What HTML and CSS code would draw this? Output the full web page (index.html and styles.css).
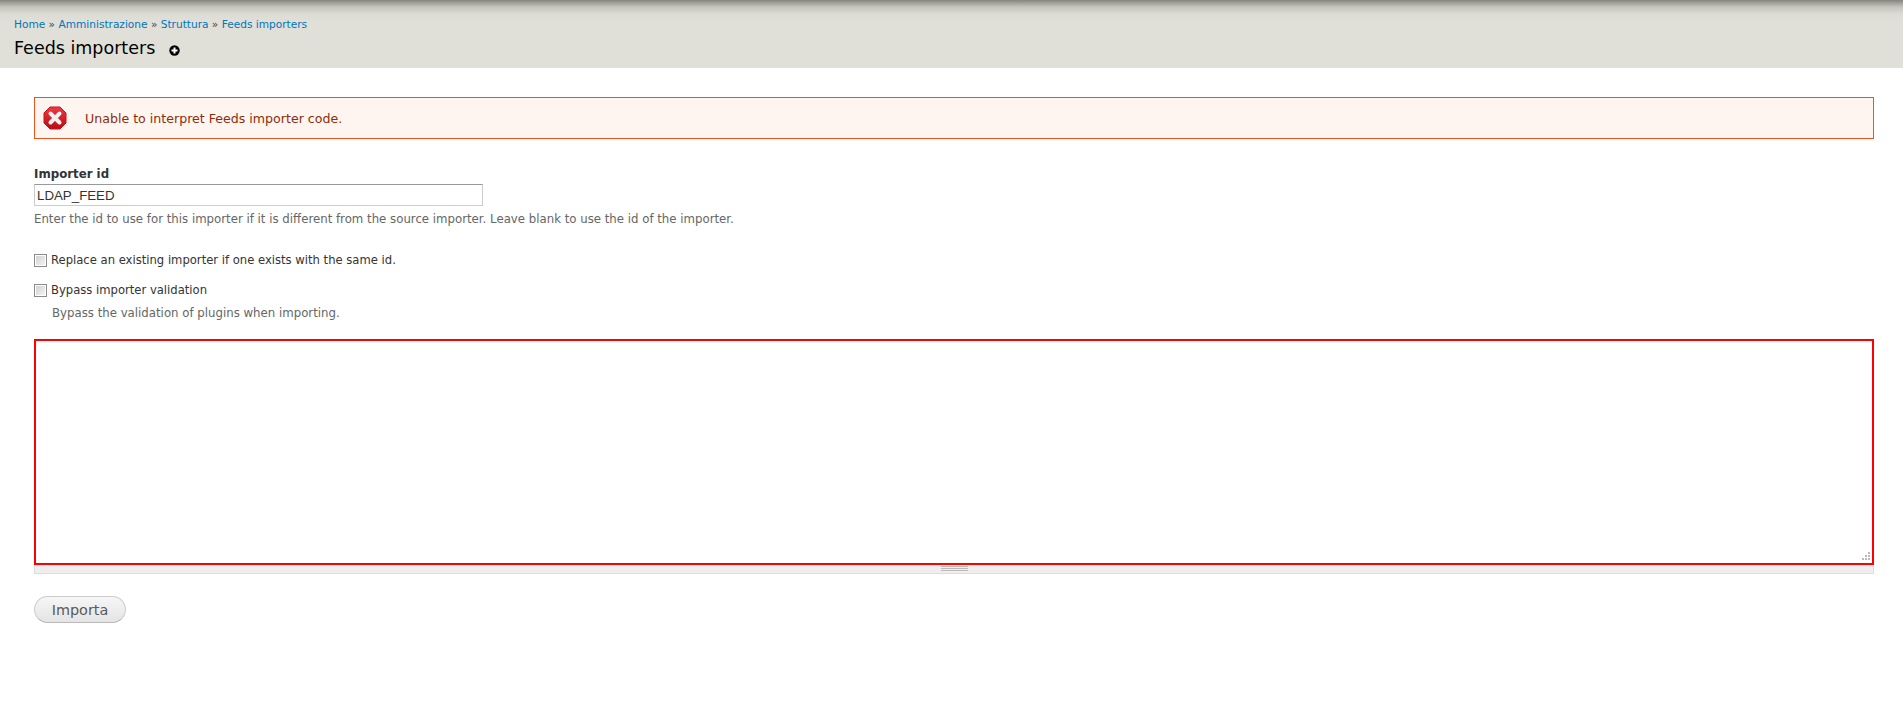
FILE: index.html
```html
<!DOCTYPE html>
<html lang="it">
<head>
<meta charset="utf-8">
<title>Feeds importers</title>
<link rel="stylesheet" href="styles.css">
</head>
<body>
<header class="branding">
  <nav class="breadcrumb"><a href="#">Home</a> » <a href="#">Amministrazione</a> » <a href="#">Struttura</a> » <a href="#">Feeds importers</a></nav>
  <div class="title-row">
    <h1 class="page-title">Feeds importers</h1>
    <a class="shortcut" href="#" aria-label="Add to shortcuts">
      <svg width="11" height="11" viewBox="0 0 11 11"><circle cx="5.5" cy="5.5" r="5.2" fill="#000"/><path d="M5.5 2.5v6M2.5 5.5h6" stroke="#fff" stroke-width="2"/></svg>
    </a>
  </div>
</header>
<main class="page">
  <div class="message-error">
    <svg class="error-icon" width="24" height="24" viewBox="0 0 24 24">
      <defs><linearGradient id="err" x1="0" y1="0" x2="0" y2="1"><stop offset="0" stop-color="#ee3a42"/><stop offset="1" stop-color="#b80b14"/></linearGradient></defs>
      <polygon points="7,1 17,1 23,7 23,17 17,23 7,23 1,17 1,7" fill="url(#err)" stroke="#c9141d"/>
      <path d="M7.5 7.5l9 9M16.5 7.5l-9 9" stroke="#f0f0f0" stroke-width="4" stroke-linecap="round"/>
    </svg>
    <span>Unable to interpret Feeds importer code.</span>
  </div>
  <form class="import-form">
    <div class="field-id">
      <label class="field-label" for="id">Importer id</label>
      <input class="text-input" id="id" type="text" value="LDAP_FEED">
      <div class="description">Enter the id to use for this importer if it is different from the source importer. Leave blank to use the id of the importer.</div>
    </div>
    <div class="check-row first">
      <span class="check"></span><label>Replace an existing importer if one exists with the same id.</label>
    </div>
    <div class="check-row">
      <span class="check"></span><label>Bypass importer validation</label>
    </div>
    <div class="description indented">Bypass the validation of plugins when importing.</div>
    <div class="code-wrap">
      <div class="code-area">
        <svg class="resize-mark" width="9" height="9" viewBox="0 0 9 9"><path d="M7 0h2v2H7zM4 3h2v2H4zM7 3h2v2H7zM1 6h2v2H1zM4 6h2v2H4zM7 6h2v2H7z" fill="#bbb"/></svg>
      </div>
      <div class="grippie"><span class="grip-lines"></span></div>
    </div>
    <button class="submit" type="button">Importa</button>
  </form>
</main>
</body>
</html>
```
FILE: styles.css
```css
html, body { margin: 0; padding: 0; background: #fff; }
body {
  font-family: "DejaVu Sans", Verdana, sans-serif;
  font-size: 11px;
  color: #333;
  height: 707px;
  overflow: hidden;
}
a { color: #0074bd; text-decoration: none; }
.branding {
  height: 68px;
  box-sizing: border-box;
  padding: 17px 14px 0;
  background: linear-gradient(to bottom, #86867f 0, #c4c4bd 7px, #dcdcd4 14px, #e0e0d8 22px, #e0e0d8 100%);
}
.breadcrumb { font-size: 10.58px; line-height: 14px; color: #444; }
.title-row { display: flex; align-items: center; margin-top: 6px; }
.page-title {
  margin: 0;
  font-size: 17.5px;
  font-weight: normal;
  line-height: 22px;
  color: #000;
}
.shortcut { display: flex; margin: 4px 0 0 14px; }
.page { padding: 29px 29px 0 34px; }
.message-error {
  display: flex;
  align-items: center;
  height: 42px;
  box-sizing: border-box;
  padding-left: 8px;
  border: 1px solid #ed541d;
  background: #fef5f1;
  color: #8c2e0b;
  font-size: 12.6px;
}
.error-icon { margin-right: 18px; flex: none; }
.field-id { margin-top: 28px; }
.field-label { display: block; font-weight: bold; font-size: 11.8px; line-height: 14px; color: #333; margin-bottom: 3px; }
.text-input {
  display: block;
  width: 449px;
  height: 22px;
  box-sizing: border-box;
  padding: 0 2px;
  border: 1px solid #ccc;
  border-top-color: #999;
  font-family: "Liberation Sans", Arial, sans-serif;
  font-size: 13.3px;
  color: #333;
}
.description { font-size: 11.75px; line-height: 14px; color: #666; margin-top: 6px; }
.check-row { display: flex; align-items: center; height: 14px; margin-top: 16px; font-size: 11.6px; color: #333; }
.check-row.first { margin-top: 27px; }
.check {
  width: 11px;
  height: 11px;
  flex: none;
  margin-right: 4px;
  border: 1px solid #8a8a8a;
  background: linear-gradient(135deg, #cfcfcf, #f6f6f6);
  box-shadow: inset 0 0 0 1px #fff;
}
.description.indented { margin: 9px 0 0 18px; }
.code-wrap { margin-top: 19px; }
.code-area {
  position: relative;
  height: 226px;
  box-sizing: border-box;
  border: 2px solid #f00;
  background: #fff;
}
.resize-mark { position: absolute; right: 2px; bottom: 2px; }
.grippie {
  display: flex;
  justify-content: center;
  height: 9px;
  box-sizing: border-box;
  padding-top: 1px;
  background: #eee;
  border: 1px solid #ddd;
  border-top: 0;
}
.grip-lines {
  display: block;
  width: 27px;
  height: 5px;
  background: repeating-linear-gradient(to bottom, #bbb 0, #bbb 1px, transparent 1px, transparent 2px);
}
.submit {
  display: block;
  margin-top: 22px;
  width: 92px;
  height: 27px;
  padding: 0;
  border: 1px solid #ccc;
  border-bottom-color: #bbb;
  border-radius: 14px;
  background: linear-gradient(to bottom, #f6f6f6, #e4e4e4);
  font-family: "DejaVu Sans", Verdana, sans-serif;
  font-size: 14.4px;
  color: #5a5a5a;
}
```
